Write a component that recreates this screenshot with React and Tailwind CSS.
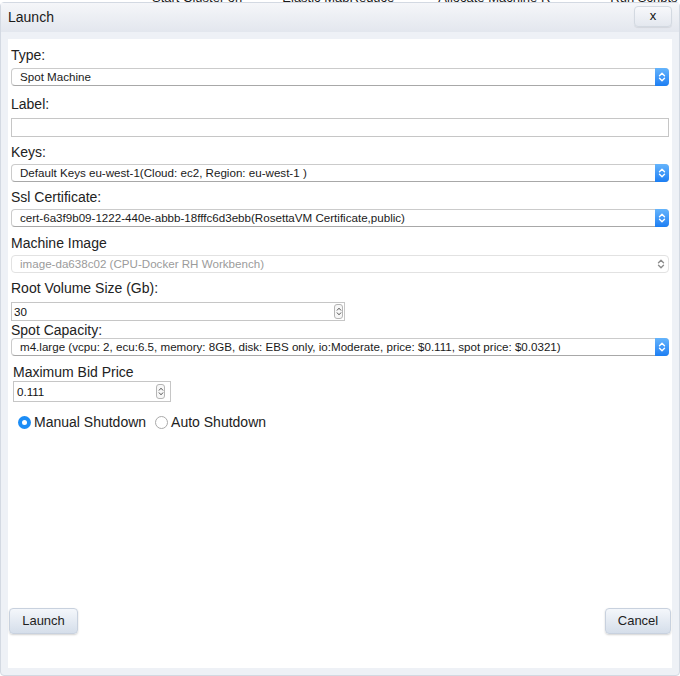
import React from "react";

const FONT = { fontFamily: '"Liberation Sans", Arial, Helvetica, sans-serif' };

function Chevrons({ color = "#ffffff" }) {
  return (
    <svg width="8" height="12" viewBox="0 0 8 12" fill="none">
      <path d="M1.5 4.8 L4 2.3 L6.5 4.8" stroke={color} strokeWidth="1.4" strokeLinecap="round" strokeLinejoin="round" />
      <path d="M1.5 7.2 L4 9.7 L6.5 7.2" stroke={color} strokeWidth="1.4" strokeLinecap="round" strokeLinejoin="round" />
    </svg>
  );
}

function Select({ value, disabled }) {
  return (
    <div
      className={`flex h-[18px] items-stretch rounded-[4px] border bg-white ${
        disabled ? "border-[#e2e2e2]" : "border-[#cbcbcb] border-b-[#a8a8a8]"
      }`}
    >
      <div
        className={`flex flex-1 items-center truncate pl-[8px] text-[11.6px] leading-none ${
          disabled ? "text-[#9b9b9b]" : "text-[#1a1a1a]"
        }`}
      >
        {value}
      </div>
      {disabled ? (
        <div className="flex w-[14px] items-center justify-center">
          <Chevrons color="#8c8c8c" />
        </div>
      ) : (
        <div className="-my-px -mr-px flex w-[14px] items-center justify-center rounded-r-[4px] bg-gradient-to-b from-[#64b4fc] to-[#1a7ef3]">
          <Chevrons />
        </div>
      )}
    </div>
  );
}

function Spinner() {
  return (
    <div className="flex h-[15px] w-[9px] items-center justify-center rounded-[3px] border border-[#b5b5b5] bg-[#f7f7f7]">
      <svg width="6" height="11" viewBox="0 0 6 11" fill="none">
        <path d="M1.2 4.2 L3 2.2 L4.8 4.2" stroke="#555" strokeWidth="1" strokeLinecap="round" strokeLinejoin="round" />
        <path d="M1.2 6.8 L3 8.8 L4.8 6.8" stroke="#555" strokeWidth="1" strokeLinecap="round" strokeLinejoin="round" />
      </svg>
    </div>
  );
}

function Label({ children, className = "" }) {
  return <div className={`text-[14px] leading-[16px] text-[#222] ${className}`}>{children}</div>;
}

function Button({ children, className = "" }) {
  return (
    <div
      className={`flex h-[26px] items-center justify-center rounded-[4px] border border-[#c8d1de] bg-gradient-to-b from-[#f4f7fb] to-[#d5deea] text-[13px] text-[#1e1e1e] shadow-[0_1px_2px_rgba(0,0,0,0.18)] ${className}`}
    >
      {children}
    </div>
  );
}

export default function App() {
  return (
    <div className="h-[676px] w-[680px] overflow-hidden bg-white" style={FONT}>
      <div className="h-[2px] overflow-hidden">
        <div className="-mt-[9px] flex text-[13px] leading-[13px] text-[#1a1a1a]">
          <span className="ml-[152px]">Start Cluster on</span>
          <span className="ml-[40px]">Elastic MapReduce</span>
          <span className="ml-[44px]">Allocate Machine R</span>
          <span className="ml-[60px]">Run Scripts</span>
        </div>
      </div>
      <div className="flex h-[674px] flex-col rounded-[4px] border border-[#d3d9e2] bg-[#eef1f6]">
        <div className="flex h-[29px] items-center justify-between bg-gradient-to-b from-[#f5f6f9] to-[#e3e7ee] pl-[7px] pr-[7px]">
          <div className="text-[14px] text-[#1a1a1a]">Launch</div>
          <div className="-mt-[3px] flex h-[21px] w-[38px] items-center justify-center rounded-[4px] border border-[#d3d9e1] bg-gradient-to-b from-[#f7f8fb] to-[#e4e8ef] text-[13px] text-[#111] shadow-[0_1px_1px_rgba(0,0,0,0.08)]">
            x
          </div>
        </div>
        <div className="mx-[7px] mb-[7px] mt-[7px] flex flex-1 flex-col bg-white pl-[3px] pr-[3px] pt-[8px]">
          <Label>Type:</Label>
          <div className="mt-[5px]">
            <Select value="Spot Machine" />
          </div>
          <Label className="mt-[10px]">Label:</Label>
          <div className="mt-[6px] h-[19px] border border-[#c6c6c6] bg-white" />
          <Label className="mt-[7px]">Keys:</Label>
          <div className="mt-[4px]">
            <Select value="Default Keys eu-west-1(Cloud: ec2, Region: eu-west-1 )" />
          </div>
          <Label className="mt-[7px]">Ssl Certificate:</Label>
          <div className="mt-[4px]">
            <Select value="cert-6a3f9b09-1222-440e-abbb-18fffc6d3ebb(RosettaVM Certificate,public)" />
          </div>
          <Label className="mt-[8px]">Machine Image</Label>
          <div className="mt-[4px]">
            <Select value="image-da638c02 (CPU-Docker RH Workbench)" disabled />
          </div>
          <Label className="mt-[7px]">Root Volume Size (Gb):</Label>
          <div className="mt-[6px] flex h-[19px] w-[334px] items-center justify-between border border-[#c6c6c6] bg-white pl-[2px] pr-[1px] text-[11.6px] text-[#111]">
            <span>30</span>
            <Spinner />
          </div>
          <Label className="mt-[1px]">Spot Capacity:</Label>
          <div>
            <Select value="m4.large (vcpu: 2, ecu:6.5, memory: 8GB, disk: EBS only, io:Moderate, price: $0.111, spot price: $0.0321)" />
          </div>
          <Label className="ml-[2px] mt-[8px]">Maximum Bid Price</Label>
          <div className="ml-[2px] mt-[1px] flex h-[21px] w-[158px] items-center justify-between border border-[#c6c6c6] bg-white pl-[3px] pr-[5px] text-[11.6px] text-[#111]">
            <span>0.111</span>
            <Spinner />
          </div>
          <div className="ml-[7px] mt-[12px] flex h-[16px] items-center text-[14px] text-[#222]">
            <div className="flex h-[13px] w-[13px] items-center justify-center rounded-full bg-[#1c8df6]">
              <div className="h-[5px] w-[5px] rounded-full bg-white" />
            </div>
            <span className="ml-[3px]">Manual Shutdown</span>
            <div className="ml-[9px] h-[13px] w-[13px] rounded-full border border-[#a9a9a9] bg-white" />
            <span className="ml-[3px]">Auto Shutdown</span>
          </div>
          <div className="flex-1" />
          <div className="-ml-[2px] mb-[34px] flex items-center justify-between">
            <Button className="w-[69px]">Launch</Button>
            <Button className="-mr-[2px] w-[66px]">Cancel</Button>
          </div>
        </div>
      </div>
    </div>
  );
}
